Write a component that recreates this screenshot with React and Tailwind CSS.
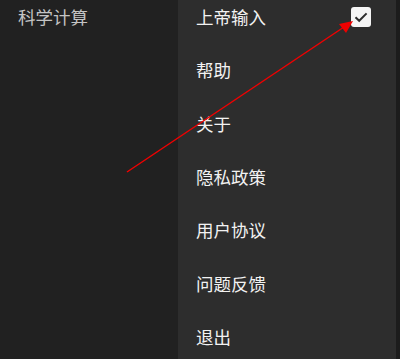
import React from "react";

const items = ["上帝输入", "帮助", "关于", "隐私政策", "用户协议", "问题反馈", "退出"];

export default function App() {
  return (
    <div
      className="relative w-[400px] h-[359px] overflow-hidden bg-[#212121] flex"
      style={{ fontFamily: '"Noto Sans CJK SC", "Noto Sans", sans-serif' }}
    >
      <div className="w-[178px] shrink-0 pl-[18px]">
        <div className="h-[34px] flex items-center text-[17.5px] text-[#c4c4c4]">科学计算</div>
      </div>
      <div className="w-[218px] shrink-0 bg-[#2d2d2d] flex flex-col -mt-[9.67px]">
        {items.map((t, i) => (
          <div key={t} className="h-[53.33px] shrink-0 flex items-center pl-[18px] pr-[25px] text-[17.5px] text-[#f2f2f2]">
            <span className="flex-1">{t}</span>
            {i === 0 && (
              <span className="w-[20px] h-[20px] rounded-[3px] bg-[#f5f5f5] flex items-center justify-center">
                <svg width="16" height="16" viewBox="0 0 16 16">
                  <path d="M2.5 8.2 L6.2 11.8 L13.6 4.4" fill="none" stroke="#2d2d2d" strokeWidth="2" />
                </svg>
              </span>
            )}
          </div>
        ))}
      </div>
      <div className="w-[4px] bg-[#1c1c1c]" />
      <svg className="absolute left-0 top-0 pointer-events-none" width="400" height="359">
        <line x1="127" y1="172" x2="344" y2="27" stroke="#f00000" strokeWidth="1.5" />
        <polygon points="353,21 339,24 346,33" fill="#f00000" />
      </svg>
    </div>
  );
}
